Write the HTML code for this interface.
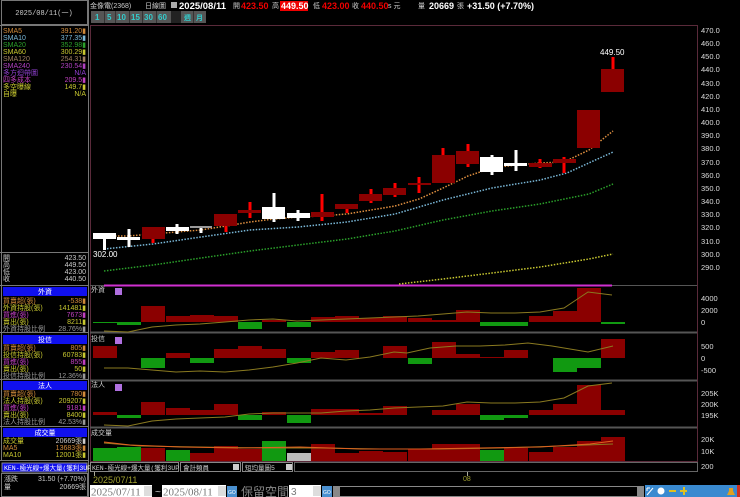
<!DOCTYPE html>
<html><head><meta charset="utf-8"><style>
html,body{margin:0;padding:0;background:#000;width:740px;height:497px;overflow:hidden}
svg{display:block}
text{font-family:"Liberation Sans","Noto Sans CJK TC",sans-serif}
.s{font-size:7px}
.m{font-family:"Liberation Mono","Noto Sans CJK TC",monospace;font-size:7px}
</style></head><body>
<svg width="740" height="497" viewBox="0 0 740 497" xmlns="http://www.w3.org/2000/svg">
<!-- left panel frames -->
<rect x="1.5" y="0.5" width="86" height="24" fill="#000" stroke="#777"/>
<text x="44" y="15" fill="#ccc" class="m" text-anchor="middle">2025/08/11(一)</text>
<line x1="88.5" y1="0" x2="88.5" y2="497" stroke="#777"/>
<line x1="1.5" y1="25" x2="1.5" y2="460" stroke="#777"/>
<line x1="0" y1="25.5" x2="88" y2="25.5" stroke="#777"/>
<g class="m">
<text x="3" y="33" fill="#d08a3a">SMA5</text><text x="86" y="33" fill="#d08a3a" text-anchor="end">391.20▮</text>
<text x="3" y="40" fill="#7ab8d8">SMA10</text><text x="86" y="40" fill="#7ab8d8" text-anchor="end">377.35▮</text>
<text x="3" y="47" fill="#2aa02a">SMA20</text><text x="86" y="47" fill="#2aa02a" text-anchor="end">352.98▮</text>
<text x="3" y="54" fill="#c8c830">SMA60</text><text x="86" y="54" fill="#c8c830" text-anchor="end">300.29▮</text>
<text x="3" y="61" fill="#a08060">SMA120</text><text x="86" y="61" fill="#a08060" text-anchor="end">254.31▮</text>
<text x="3" y="68" fill="#b040c0">SMA240</text><text x="86" y="68" fill="#b040c0" text-anchor="end">230.54▮</text>
<text x="3" y="75" fill="#9040d0">多方迴帶圖</text><text x="86" y="75" fill="#9040d0" text-anchor="end">N/A</text>
<text x="3" y="82" fill="#c040c0">四多成本</text><text x="86" y="82" fill="#c040c0" text-anchor="end">209.5▮</text>
<text x="3" y="89" fill="#c8c830">多空曝線</text><text x="86" y="89" fill="#c8c830" text-anchor="end">149.7▮</text>
<text x="3" y="96" fill="#c8c830">自曝</text><text x="86" y="96" fill="#c8c830" text-anchor="end">N/A</text>
</g>
<line x1="0" y1="252.5" x2="88" y2="252.5" stroke="#777"/>
<g class="m" fill="#ccc">
<text x="3" y="260">開</text><text x="86" y="260" text-anchor="end">423.50</text>
<text x="3" y="267">高</text><text x="86" y="267" text-anchor="end">449.50</text>
<text x="3" y="274">低</text><text x="86" y="274" text-anchor="end">423.00</text>
<text x="3" y="281">收</text><text x="86" y="281" text-anchor="end">440.50</text>
</g>
<line x1="0" y1="285.5" x2="88" y2="285.5" stroke="#777"/>
<!-- 外資 -->
<rect x="3" y="287" width="84" height="9" fill="#1010ee"/><text x="45" y="294" fill="#fff" class="m" text-anchor="middle">外資</text>
<g class="m">
<text x="3" y="303" fill="#d08a3a">買賣超(張)</text><text x="86" y="303" fill="#d08a3a" text-anchor="end">-538▮</text>
<text x="3" y="310" fill="#c8c830">外資持股(張)</text><text x="86" y="310" fill="#c8c830" text-anchor="end">141481▮</text>
<text x="3" y="317" fill="#c040c0">買進(張)</text><text x="86" y="317" fill="#c040c0" text-anchor="end">7673▮</text>
<text x="3" y="324" fill="#c8c830">賣出(張)</text><text x="86" y="324" fill="#c8c830" text-anchor="end">8211▮</text>
<text x="3" y="331" fill="#999">外資持股比例</text><text x="86" y="331" fill="#999" text-anchor="end">28.76%▮</text>
</g>
<line x1="0" y1="332.5" x2="88" y2="332.5" stroke="#777"/>
<rect x="3" y="335" width="84" height="9" fill="#1010ee"/><text x="45" y="342" fill="#fff" class="m" text-anchor="middle">投信</text>
<g class="m">
<text x="3" y="350" fill="#d08a3a">買賣超(張)</text><text x="86" y="350" fill="#d08a3a" text-anchor="end">805▮</text>
<text x="3" y="357" fill="#c8c830">投信持股(張)</text><text x="86" y="357" fill="#c8c830" text-anchor="end">60783▮</text>
<text x="3" y="364" fill="#c040c0">買進(張)</text><text x="86" y="364" fill="#c040c0" text-anchor="end">855▮</text>
<text x="3" y="371" fill="#c8c830">賣出(張)</text><text x="86" y="371" fill="#c8c830" text-anchor="end">50▮</text>
<text x="3" y="378" fill="#999">投信持股比例</text><text x="86" y="378" fill="#999" text-anchor="end">12.36%▮</text>
</g>
<line x1="0" y1="379.5" x2="88" y2="379.5" stroke="#777"/>
<rect x="3" y="381" width="84" height="9" fill="#1010ee"/><text x="45" y="388" fill="#fff" class="m" text-anchor="middle">法人</text>
<g class="m">
<text x="3" y="396" fill="#d08a3a">買賣超(張)</text><text x="86" y="396" fill="#d08a3a" text-anchor="end">780▮</text>
<text x="3" y="403" fill="#c8c830">法人持股(張)</text><text x="86" y="403" fill="#c8c830" text-anchor="end">209207▮</text>
<text x="3" y="410" fill="#c040c0">買進(張)</text><text x="86" y="410" fill="#c040c0" text-anchor="end">9181▮</text>
<text x="3" y="417" fill="#c8c830">賣出(張)</text><text x="86" y="417" fill="#c8c830" text-anchor="end">8400▮</text>
<text x="3" y="424" fill="#999">法人持股比例</text><text x="86" y="424" fill="#999" text-anchor="end">42.53%▮</text>
</g>
<line x1="0" y1="426.5" x2="88" y2="426.5" stroke="#777"/>
<rect x="3" y="428" width="84" height="9" fill="#1010ee"/><text x="45" y="435" fill="#fff" class="m" text-anchor="middle">成交量</text>
<g class="m">
<text x="3" y="443" fill="#c8c830">成交量</text><text x="86" y="443" fill="#ccc" text-anchor="end">20669張▮</text>
<text x="3" y="450" fill="#d08a3a">MA5</text><text x="86" y="450" fill="#d08a3a" text-anchor="end">13683張▮</text>
<text x="3" y="457" fill="#c8c830">MA10</text><text x="86" y="457" fill="#c8c830" text-anchor="end">12001張▮</text>
</g>
<line x1="0" y1="460.5" x2="88" y2="460.5" stroke="#777"/>
<rect x="2" y="463" width="85" height="9" fill="#1010ee" stroke="#888"/><text x="4" y="470" fill="#fff" class="m" style="font-size:6.5px">KEN-極光線+爆大量(獲利3UP)</text>
<rect x="1.5" y="473.5" width="86" height="23" fill="#000" stroke="#777"/>
<g class="m" fill="#ccc"><text x="4" y="481">漲跌</text><text x="86" y="481" text-anchor="end">31.50 (+7.70%)</text>
<text x="4" y="489">量</text><text x="86" y="489" text-anchor="end">20669張</text></g>

<!-- top bar -->
<g class="m">
<text x="90" y="8" fill="#ccc">金像電(2368)</text>
<text x="145" y="8" fill="#ccc">日線圖</text>
<rect x="171" y="2" width="6" height="6" fill="#aaa"/>
<text x="179" y="9" fill="#fff" style="font-size:9.5px;font-weight:bold;font-family:'Liberation Sans',sans-serif">2025/08/11</text>
<text x="233" y="8" fill="#ccc">開</text><text x="241" y="9" fill="#e00" style="font-size:9px;font-weight:bold;font-family:'Liberation Sans',sans-serif">423.50</text>
<text x="272" y="8" fill="#ccc">高</text><rect x="280" y="1" width="28" height="10" fill="#e00"/><text x="281" y="9" fill="#fff" style="font-size:9px;font-weight:bold;font-family:'Liberation Sans',sans-serif">449.50</text>
<text x="313" y="8" fill="#ccc">低</text><text x="322" y="9" fill="#e00" style="font-size:9px;font-weight:bold;font-family:'Liberation Sans',sans-serif">423.00</text>
<text x="352" y="8" fill="#ccc">收</text><text x="361" y="9" fill="#e00" style="font-size:9px;font-weight:bold;font-family:'Liberation Sans',sans-serif">440.50</text>
<text x="388" y="8" fill="#ccc">s 元</text><text x="418" y="8" fill="#ccc">量</text>
<text x="429" y="9" fill="#fff" style="font-size:9px;font-weight:bold;font-family:'Liberation Sans',sans-serif">20669</text><text x="457" y="8" fill="#ccc">張</text>
<text x="467" y="9" fill="#fff" style="font-size:9px;font-weight:bold;font-family:'Liberation Sans',sans-serif">+31.50 (+7.70%)</text>
</g>
<g style="font-size:8px;font-weight:bold" fill="#3cc">
<rect x="91" y="11" width="80" height="12" fill="#555"/>
<rect x="171" y="11" width="10" height="12" fill="#222"/>
<rect x="181" y="11" width="25" height="12" fill="#555"/>
<g stroke="#333" stroke-width="1"><line x1="104.5" y1="11" x2="104.5" y2="23"/><line x1="115.5" y1="11" x2="115.5" y2="23"/><line x1="129.5" y1="11" x2="129.5" y2="23"/><line x1="142.5" y1="11" x2="142.5" y2="23"/><line x1="156.5" y1="11" x2="156.5" y2="23"/><line x1="193.5" y1="11" x2="193.5" y2="23"/></g>
<text x="95" y="20">1</text><text x="107" y="20">5</text><text x="117" y="20">10</text><text x="131" y="20">15</text><text x="144" y="20">30</text><text x="158" y="20">60</text>
<text x="184" y="20" style="font-size:7px">週</text><text x="196" y="20" style="font-size:7px">月</text>
</g>

<!-- main chart frame -->
<rect x="90.5" y="25.5" width="607" height="436" fill="none" stroke="#5a2a3a"/>
<line x1="90" y1="285.5" x2="697" y2="285.5" stroke="#555"/>
<line x1="104" y1="285.5" x2="612" y2="285.5" stroke="#d030d0" stroke-width="2"/>
<line x1="90" y1="332.5" x2="697" y2="332.5" stroke="#555" stroke-width="2"/>
<line x1="90" y1="380.5" x2="697" y2="380.5" stroke="#555" stroke-width="2"/>
<line x1="90" y1="427.5" x2="697" y2="427.5" stroke="#555" stroke-width="2"/>

<!-- price axis -->
<g style="font-size:7.5px" fill="#ddd">
<text x="701" y="33">470.0</text><text x="701" y="46">460.0</text><text x="701" y="59">450.0</text><text x="701" y="72">440.0</text><text x="701" y="86">430.0</text><text x="701" y="99">420.0</text><text x="701" y="112">410.0</text><text x="701" y="125">400.0</text><text x="701" y="138">390.0</text><text x="701" y="151">380.0</text><text x="701" y="165">370.0</text><text x="701" y="178">360.0</text><text x="701" y="191">350.0</text><text x="701" y="204">340.0</text><text x="701" y="217">330.0</text><text x="701" y="230">320.0</text><text x="701" y="244">310.0</text><text x="701" y="257">300.0</text><text x="701" y="270">290.0</text>
<text x="701" y="301">4000</text><text x="701" y="313">2000</text><text x="701" y="325">0</text>
<text x="701" y="349">500</text><text x="701" y="361">0</text><text x="701" y="373">-500</text>
<text x="701" y="396">205K</text><text x="701" y="407">200K</text><text x="701" y="418">195K</text>
<text x="701" y="442">20K</text><text x="701" y="454">10K</text><text x="701" y="469">200</text>
</g>

<!-- MA lines -->
<g fill="none" stroke-width="1.5" stroke-dasharray="1.5 1.5">
<polyline stroke="#c8c830" points="399,284 443,279 492,273 540,267 589,259 613,254"/>
<polyline stroke="#2aa02a" points="104,271 153,265 201,258 250,251 298,245 347,239 395,231 443,220 492,211 540,204 589,194 613,184"/>
<polyline stroke="#7ab8d8" points="104,249 153,244 201,237 250,230 298,227 347,222 395,214 443,200 492,188 540,180 567,173 613,152"/>
<polyline stroke="#e09040" points="100,236 129,236 153,234 177,232 201,230 226,226 250,222 274,219 298,217 322,216 347,214 371,210 395,206 419,199 443,188 468,176 492,168 516,165 540,163 564,162 589,150 613,131"/>
</g>

<!-- candles -->
<g fill="#f00">
<rect x="151.5" y="227" width="3" height="16"/><rect x="224.5" y="214" width="3" height="18"/><rect x="248.5" y="202" width="3" height="16"/>
<rect x="320.5" y="194" width="3" height="27"/><rect x="345.5" y="204" width="3" height="9"/><rect x="369.5" y="189" width="3" height="14"/>
<rect x="393.5" y="183" width="3" height="14"/><rect x="417.5" y="177" width="3" height="16"/><rect x="441.5" y="148" width="3" height="35"/>
<rect x="466.5" y="144" width="3" height="23"/><rect x="538.5" y="159" width="3" height="9"/><rect x="562.5" y="157" width="3" height="16"/>
<rect x="611.5" y="57" width="3" height="35"/>
</g>
<g fill="#8b0000">
<rect x="142" y="227" width="23" height="12"/><rect x="214" y="214" width="23" height="12"/><rect x="238" y="210" width="23" height="3"/>
<rect x="311" y="212" width="23" height="5"/><rect x="335" y="204" width="23" height="5"/><rect x="359" y="194" width="23" height="7"/>
<rect x="383" y="188" width="23" height="7"/><rect x="408" y="183" width="23" height="2"/><rect x="432" y="155" width="23" height="28"/>
<rect x="456" y="151" width="23" height="13"/><rect x="529" y="163" width="23" height="4"/><rect x="553" y="159" width="23" height="4"/>
<rect x="577" y="110" width="23" height="38"/><rect x="601" y="69" width="23" height="23"/>
</g>
<g fill="#fff">
<rect x="103" y="233" width="3" height="17"/><rect x="93" y="233" width="23" height="6"/>
<rect x="127.5" y="229" width="3" height="18"/><rect x="117" y="237" width="23" height="3"/>
<rect x="175.5" y="224" width="3" height="10"/><rect x="166" y="227" width="23" height="4"/>
<rect x="199.5" y="226" width="3" height="7"/><rect x="190" y="226" width="22" height="2" fill="#999"/>
<rect x="272.5" y="193" width="3" height="29"/><rect x="262" y="207" width="23" height="12"/>
<rect x="296.5" y="210" width="3" height="11"/><rect x="287" y="213" width="23" height="5"/>
<rect x="490.5" y="155" width="3" height="20"/><rect x="480" y="157" width="23" height="15"/>
<rect x="514.5" y="150" width="3" height="21"/><rect x="504" y="163" width="23" height="3"/>
</g>
<text x="93" y="257" fill="#fff" style="font-size:8px">302.00</text>
<text x="600" y="55" fill="#fff" style="font-size:8px">449.50</text>

<!-- panel labels -->
<g class="m" fill="#ccc"><text x="91" y="292">外資</text><text x="91" y="341">投信</text><text x="91" y="387">法人</text><text x="91" y="435">成交量</text></g>
<g fill="#b070e0"><rect x="115" y="288" width="7" height="7"/><rect x="115" y="337" width="7" height="7"/><rect x="115" y="384" width="7" height="7"/></g>

<!-- panel 1 -->
<g fill="#8b0000">
<rect x="141" y="306" width="24" height="16"/><rect x="166" y="316" width="24" height="6"/><rect x="190" y="315" width="24" height="7"/><rect x="214" y="316" width="24" height="6"/>
<rect x="262" y="320" width="24" height="2"/><rect x="311" y="317" width="24" height="5"/><rect x="335" y="316" width="24" height="6"/><rect x="359" y="318" width="24" height="4"/>
<rect x="383" y="316" width="24" height="6"/><rect x="408" y="318" width="24" height="4"/><rect x="432" y="320" width="24" height="2"/><rect x="456" y="310" width="24" height="12"/>
<rect x="529" y="316" width="24" height="6"/><rect x="553" y="311" width="24" height="11"/><rect x="577" y="288" width="24" height="34"/>
</g>
<g fill="#119911">
<rect x="93" y="322" width="24" height="1"/><rect x="117" y="322" width="24" height="3"/><rect x="238" y="322" width="24" height="7"/><rect x="287" y="322" width="24" height="5"/>
<rect x="480" y="322" width="24" height="4"/><rect x="504" y="322" width="24" height="4"/><rect x="601" y="322" width="24" height="2"/>
</g>
<polyline fill="none" stroke="#8a7a20" stroke-width="1" points="104,331 128,332 152,327 176,325 200,324 225,322 249,320 273,319 297,321 321,320 346,319 370,318 394,317 418,316 443,314 467,312 491,313 515,313 540,312 564,308 588,292 612,295"/>
<!-- panel 2 -->
<g fill="#8b0000">
<rect x="93" y="346" width="24" height="12"/><rect x="166" y="353" width="24" height="5"/><rect x="214" y="349" width="24" height="9"/><rect x="238" y="346" width="24" height="12"/>
<rect x="262" y="349" width="24" height="9"/><rect x="311" y="352" width="24" height="6"/><rect x="335" y="350" width="24" height="8"/><rect x="383" y="346" width="24" height="12"/>
<rect x="432" y="342" width="24" height="16"/><rect x="456" y="354" width="24" height="4"/><rect x="480" y="357" width="24" height="1"/><rect x="504" y="350" width="24" height="8"/>
<rect x="601" y="339" width="24" height="19"/>
</g>
<g fill="#119911">
<rect x="141" y="358" width="24" height="10"/><rect x="190" y="358" width="24" height="5"/><rect x="287" y="358" width="24" height="5"/><rect x="408" y="358" width="24" height="6"/>
<rect x="553" y="358" width="24" height="14"/><rect x="577" y="358" width="24" height="10"/>
</g>
<polyline fill="none" stroke="#8a7a20" stroke-width="1" points="104,368 128,368 152,370 176,372 200,371 225,372 249,370 273,367 297,363 321,358 346,360 370,357 394,352 407,353 430,348 456,346 480,346 505,345 528,343 552,346 588,352 613,346"/>
<!-- panel 3 -->
<g fill="#8b0000">
<rect x="93" y="412" width="24" height="3"/><rect x="141" y="402" width="24" height="13"/><rect x="166" y="408" width="24" height="7"/><rect x="190" y="410" width="24" height="5"/>
<rect x="214" y="404" width="24" height="11"/><rect x="262" y="412" width="24" height="3"/><rect x="311" y="409" width="24" height="6"/><rect x="335" y="409" width="24" height="6"/>
<rect x="359" y="413" width="24" height="2"/><rect x="383" y="406" width="24" height="9"/><rect x="432" y="410" width="24" height="5"/><rect x="456" y="404" width="24" height="11"/>
<rect x="529" y="410" width="24" height="5"/><rect x="553" y="404" width="24" height="11"/><rect x="577" y="385" width="24" height="30"/><rect x="601" y="410" width="24" height="5"/>
</g>
<g fill="#119911">
<rect x="117" y="415" width="24" height="3"/><rect x="238" y="415" width="24" height="5"/><rect x="287" y="415" width="24" height="8"/><rect x="480" y="415" width="24" height="5"/><rect x="504" y="415" width="24" height="3"/>
</g>
<polyline fill="none" stroke="#8a7a20" stroke-width="1" points="104,425 128,426 152,421 176,419 200,418 225,417 249,414 273,413 297,413 321,413 346,411 370,410 394,408 418,407 443,406 467,402 491,403 515,403 540,402 564,398 588,386 612,383"/>
<!-- volume -->
<g fill="#8b0000">
<rect x="141" y="448" width="24" height="13"/><rect x="190" y="453" width="24" height="8"/><rect x="214" y="446" width="24" height="15"/><rect x="238" y="449" width="24" height="12"/>
<rect x="311" y="444" width="24" height="17"/><rect x="335" y="453" width="24" height="8"/><rect x="359" y="451" width="24" height="10"/><rect x="383" y="452" width="24" height="9"/>
<rect x="408" y="449" width="24" height="12"/><rect x="432" y="444" width="24" height="17"/><rect x="456" y="444" width="24" height="17"/><rect x="504" y="448" width="24" height="13"/>
<rect x="529" y="452" width="24" height="9"/><rect x="553" y="447" width="24" height="14"/><rect x="577" y="441" width="24" height="20"/><rect x="601" y="437" width="24" height="24"/>
</g>
<g fill="#119911"><rect x="93" y="448" width="24" height="13"/><rect x="117" y="447" width="24" height="14"/><rect x="166" y="450" width="24" height="11"/><rect x="262" y="441" width="24" height="20"/><rect x="480" y="450" width="24" height="11"/></g>
<rect x="287" y="453" width="24" height="8" fill="#bbb"/>
<polyline fill="none" stroke="#8a7a20" stroke-width="1" points="104,443 140,446 200,447 260,448 320,448 380,449 440,449 500,448 560,446 613,444"/>
<polyline fill="none" stroke="#e06020" stroke-width="1" points="104,442 130,445 180,447 240,448 300,447 360,449 420,449 480,448 540,447 590,444 613,441"/>

<!-- dropdown row -->
<rect x="90" y="462" width="608" height="10" fill="#000"/>
<rect x="90.5" y="462.5" width="88" height="9" fill="#000" stroke="#888"/><text x="92" y="470" fill="#ccc" class="m" style="font-size:6.5px">KEN-極光線+爆大量(獲利3UP)</text>
<rect x="180.5" y="462.5" width="60" height="9" fill="#000" stroke="#888"/><text x="183" y="470" fill="#ccc" class="m" style="font-size:6.5px">會計類員</text>
<rect x="233" y="464" width="6" height="6" fill="#ccc"/>
<rect x="242.5" y="462.5" width="50" height="9" fill="#000" stroke="#888"/><text x="245" y="470" fill="#ccc" class="m" style="font-size:6.5px">短均量圖5</text>
<rect x="286" y="464" width="6" height="6" fill="#ccc"/>
<rect x="294.5" y="462.5" width="403" height="9" fill="#000" stroke="#666"/>
<line x1="467.5" y1="472" x2="467.5" y2="476" stroke="#aa9"/>
<text x="463" y="481" fill="#a0a030" style="font-size:7px">08</text>
<line x1="94.5" y1="472" x2="94.5" y2="476" stroke="#aa9"/>
<text x="93" y="483" fill="#a0a030" style="font-size:9px">2025/07/11</text>

<!-- bottom controls -->
<rect x="90" y="485" width="62" height="12" fill="#fff"/><text x="91" y="495.5" fill="#777" style="font-size:11px;font-family:'Liberation Serif',serif">2025/07/11</text>
<rect x="144" y="486" width="8" height="10" fill="#ddd"/>
<text x="155" y="495" fill="#ccc" style="font-size:10px">~</text>
<rect x="162" y="485" width="64" height="12" fill="#fff"/><text x="163" y="495.5" fill="#777" style="font-size:11px;font-family:'Liberation Serif',serif">2025/08/11</text>
<rect x="218" y="486" width="8" height="10" fill="#ddd"/>
<rect x="227" y="486" width="10" height="11" fill="#4a90d0"/><text x="228" y="494" fill="#fff" style="font-size:5px">GO</text>
<text x="241" y="496" fill="#888" style="font-size:12px;font-family:'Liberation Sans','Noto Sans CJK TC',sans-serif">保留空間</text>
<rect x="289" y="485" width="32" height="12" fill="#fff"/><text x="291" y="495" fill="#777" style="font-size:10px">3</text>
<rect x="313" y="486" width="8" height="10" fill="#ddd"/>
<rect x="322" y="486" width="10" height="11" fill="#4a90d0"/><text x="323" y="494" fill="#fff" style="font-size:5px">GO</text>
<rect x="333" y="486" width="6" height="11" fill="#888"/><rect x="339.5" y="486.5" width="298" height="10" fill="#000" stroke="#888"/><rect x="638" y="486" width="6" height="11" fill="#888"/>
<g fill="#3a8ad0"><rect x="645" y="485" width="11" height="12"/><rect x="656" y="485" width="11" height="12"/><rect x="667" y="485" width="11" height="12"/><rect x="678" y="485" width="11" height="12"/><rect x="689" y="485" width="11" height="12"/><rect x="700" y="485" width="11" height="12"/><rect x="711" y="485" width="11" height="12"/><rect x="722" y="485" width="18" height="12"/></g>
<circle cx="661" cy="491" r="3.5" fill="#fff"/><rect x="669" y="490" width="7" height="2" fill="#e0c020"/><rect x="680" y="490" width="7" height="2" fill="#e0c020"/><rect x="683" y="487" width="2" height="8" fill="#e0c020"/>
<path d="M647 495 L653 488 M647 488 L650 488 M647 488 L647 491" stroke="#fff" fill="none"/>
<path d="M727 495 L735 495 L733 491 L733 488 L729 488 L729 491 Z" fill="#e0a020"/>
<rect x="737" y="485" width="3" height="12" fill="#d03020"/>
</svg>
</body></html>
